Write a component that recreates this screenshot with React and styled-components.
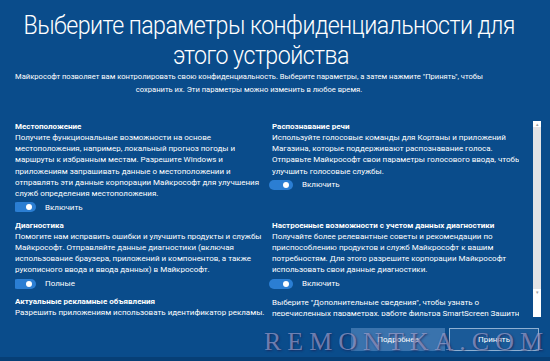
import styled, { createGlobalStyle } from 'styled-components';

const GlobalStyle = createGlobalStyle`
  html, body { margin: 0; padding: 0; background: #0a4c8b; }
  * { box-sizing: border-box; }
`;

const sections = {
  left: [
    {
      id: 1,
      title: 'Местоположение',
      lines: [
        'Получите функциональные возможности на основе',
        'местоположения, например, локальный прогноз погоды и',
        'маршруты к избранным местам. Разрешите Windows и',
        'приложениям запрашивать данные о местоположении и',
        'отправлять эти данные корпорации Майкрософт для улучшения',
        'служб определения местоположения.',
      ],
      toggle: 'Включить',
    },
    {
      id: 2,
      title: 'Диагностика',
      lines: [
        'Помогите нам исправить ошибки и улучшить продукты и службы',
        'Майкрософт. Отправляйте данные диагностики (включая',
        'использование браузера, приложений и компонентов, а также',
        'рукописного ввода и ввода данных) в Майкрософт.',
      ],
      toggle: 'Полные',
    },
    {
      id: 3,
      title: 'Актуальные рекламные объявления',
      lines: ['Разрешить приложениям использовать идентификатор рекламы.'],
    },
  ],
  right: [
    {
      id: 4,
      title: 'Распознавание речи',
      lines: [
        'Используйте голосовые команды для Кортаны и приложений',
        'Магазина, которые поддерживают распознавание голоса.',
        'Отправьте Майкрософт свои параметры голосового ввода, чтобы',
        'улучшить голосовые службы.',
      ],
      toggle: 'Включить',
      gap: 30,
    },
    {
      id: 5,
      title: 'Настроенные возможности с учетом данных диагностики',
      lines: [
        'Получайте более релевантные советы и рекомендации по',
        'приспособлению продуктов и служб Майкрософт к вашим',
        'потребностям. Для этого разрешите корпорации Майкрософт',
        'использовать свои данные диагностики.',
      ],
      toggle: 'Включить',
      gap: 8.5,
    },
    {
      id: 6,
      lines: [
        'Выберите "Дополнительные сведения", чтобы узнать о',
        'перечисленных параметрах, работе фильтра SmartScreen Защитника',
      ],
    },
  ],
};

export default function App() {
  return (
    <Page>
      <GlobalStyle />
      <Header>
        <Title>Выберите параметры конфиденциальности для<br />этого устройства</Title>
        <Intro>
          Майкрософт позволяет вам контролировать свою конфиденциальность. Выберите параметры, а затем нажмите "Принять", чтобы<br />
          сохранить их. Эти параметры можно изменить в любое время.
        </Intro>
      </Header>
      <Body>
        <Scroller>
          {['left', 'right'].map(col => (
            <Column key={col}>
              {sections[col].map(s => (
                <Section key={s.id} $gap={s.gap}>
                  {s.title && <SectionTitle>{s.title}</SectionTitle>}
                  <Text>
                    {s.lines.map((l, i) => (
                      <span key={i}>{l}<br /></span>
                    ))}
                  </Text>
                  {s.toggle && (
                    <ToggleRow>
                      <Switch><Knob /></Switch>
                      <ToggleLabel>{s.toggle}</ToggleLabel>
                    </ToggleRow>
                  )}
                </Section>
              ))}
            </Column>
          ))}
        </Scroller>
        <ScrollTrack>
          <Arrow>▴</Arrow>
          <Thumb />
          <Arrow>▾</Arrow>
        </ScrollTrack>
      </Body>
      <Footer>
        <Button $primary={false}>Подробнее</Button>
        <Button $primary>Принять</Button>
      </Footer>
      <Watermark>REMONTKA.COM</Watermark>
    </Page>
  );
}

const Page = styled.div`
  position: relative;
  width: 550px;
  height: 361px;
  overflow: hidden;
  background: #0a4c8b;
  border-bottom: 4px solid #073f76;
  color: #ffffff;
  font-family: Roboto, 'Open Sans', sans-serif;
  display: flex;
  flex-direction: column;
`;

const Header = styled.div`
  padding-top: 10px;
  text-align: center;
  white-space: nowrap;
`;

const Title = styled.h1`
  margin: 0 28px 0 0;
  font-weight: 300;
  font-size: 25.5px;
  line-height: 30px;
  letter-spacing: -0.6px;
  transform: scaleX(0.91);
`;

const Intro = styled.p`
  margin: 1px 0 0;
  padding-right: 52px;
  font-size: 7.6px;
  line-height: 12.5px;
`;

const Body = styled.div`
  display: flex;
  align-items: flex-start;
  margin-top: 21px;
  height: 200px;
  padding-left: 15px;
`;

const Scroller = styled.div`
  flex: 1;
  height: 199px;
  display: grid;
  grid-template-columns: 257px 1fr;
  overflow: hidden;
  padding-top: 4px;
`;

const Column = styled.div`
  display: flex;
  flex-direction: column;
`;

const Section = styled.div`
  margin-bottom: ${p => (p.$gap ?? 7.5)}px;
`;

const SectionTitle = styled.div`
  font-weight: 700;
  font-size: 8px;
  line-height: 11px;
`;

const Text = styled.div`
  font-size: 8px;
  line-height: 11.2px;
  white-space: nowrap;
`;

const ToggleRow = styled.div`
  display: flex;
  align-items: center;
  gap: 9px;
  height: 10px;
  margin-top: 3px;
  margin-left: -3px;
`;

const Switch = styled.div`
  width: 24px;
  height: 10px;
  border-radius: 5px;
  background: #2b7ed3;
  position: relative;
`;

const Knob = styled.div`
  position: absolute;
  right: 4px;
  top: 2px;
  width: 6px;
  height: 6px;
  border-radius: 50%;
  background: #ffffff;
`;

const ToggleLabel = styled.span`
  font-size: 8px;
`;

const ScrollTrack = styled.div`
  flex-shrink: 0;
  width: 8px;
  margin: 4px 9px 0 14px;
  height: 196px;
  background: #ffffff;
  display: flex;
  flex-direction: column;
  align-items: center;
`;

const Thumb = styled.div`
  width: 8px;
  height: 162px;
  background: #e4e4e6;
`;

const Arrow = styled.div`
  font-size: 5px;
  line-height: 6px;
  color: #a0a0a0;
`;

const Footer = styled.div`
  display: flex;
  justify-content: flex-end;
  gap: 4px;
  padding: 11px 11px 0 0;
`;

const Button = styled.div`
  width: ${p => (p.$primary ? '90px' : '94px')};
  height: 23px;
  display: flex;
  align-items: center;
  justify-content: center;
  font-size: 8px;
  color: #ffffff;
  background: ${p => (p.$primary ? '#1a5a98' : '#3a73ad')};
  border: 1px solid ${p => (p.$primary ? '#8fb0d2' : '#3a73ad')};
`;

const Watermark = styled.div`
  position: absolute;
  left: 264px;
  top: 327px;
  font-family: 'Liberation Serif', serif;
  font-size: 26px;
  line-height: 30px;
  letter-spacing: 6px;
  color: rgba(175, 172, 215, 0.6);
  text-shadow: 1px 1px 2px rgba(30, 30, 80, 0.7);
  pointer-events: none;
`;
